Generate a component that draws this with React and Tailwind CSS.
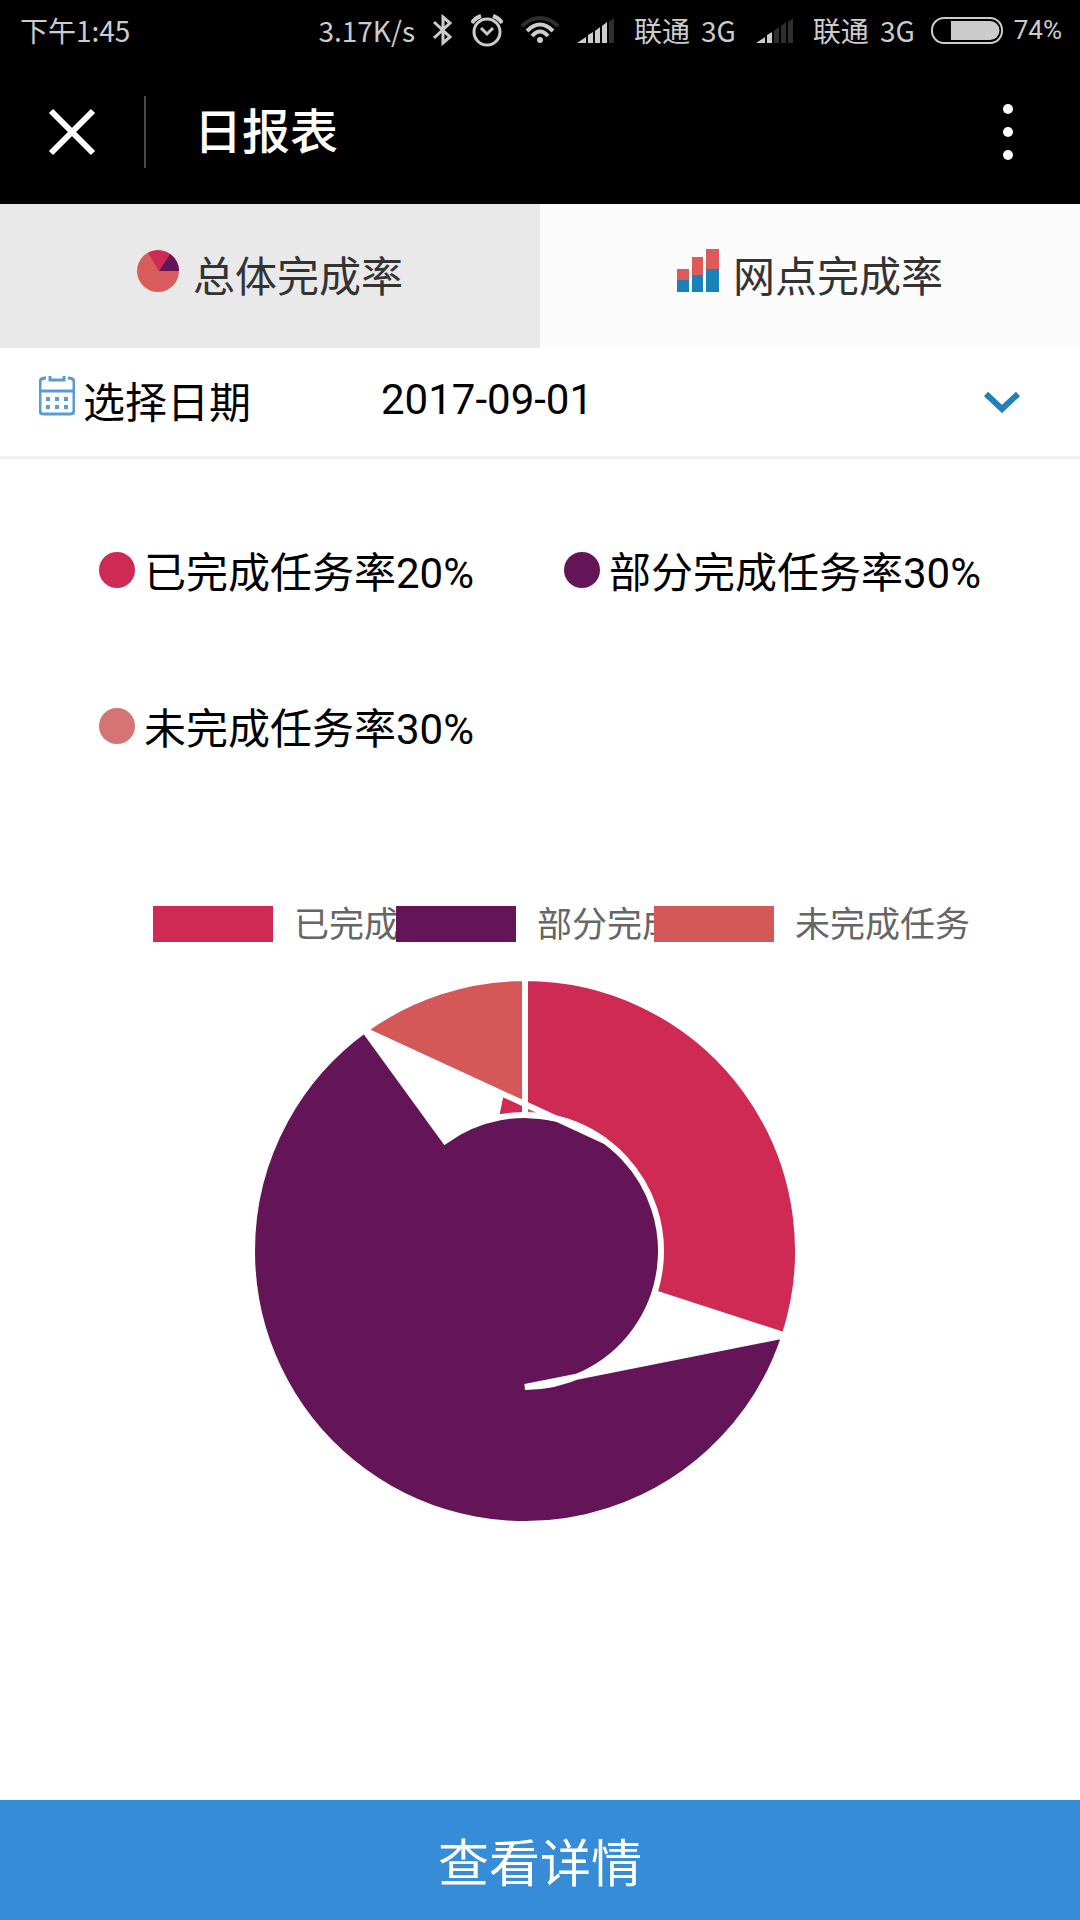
import React, { useState } from 'react';

const COLORS = {
  done: '#ce2a54',
  partial: '#641557',
  todo: '#d45858',
};

const rates = [
  { label: '已完成任务率', value: 20, dot: 'bg-[#ce2a54]' },
  { label: '部分完成任务率', value: 30, dot: 'bg-[#641557]' },
  { label: '未完成任务率', value: 30, dot: 'bg-[#d47474]' },
];

const chartData = [
  { label: '已完成任务', value: 30, color: COLORS.done },
  { label: '部分完成任务', value: 60, color: COLORS.partial },
  { label: '未完成任务', value: 10, color: COLORS.todo },
];

const OUTER = 273;
const INNER = 136;

const point = (radius, angle) => {
  const rad = (angle * Math.PI) / 180;
  return `${radius * Math.cos(rad)} ${radius * Math.sin(rad)}`;
};

// both arcs of a slice run clockwise, so slices fold over each other in the middle
const slicePath = (start, end) => {
  const sweep = end - start;
  const large = sweep > 180 ? 1 : 0;
  return [
    `M ${point(OUTER, start)}`,
    `A ${OUTER} ${OUTER} 0 ${large} 1 ${point(OUTER, end)}`,
    `L ${point(INNER, end)}`,
    `A ${INNER} ${INNER} 0 ${large} 1 ${point(INNER, end + sweep)}`,
    'Z',
  ].join(' ');
};

const DoughnutChart = ({ data }) => {
  const total = data.reduce((sum, item) => sum + item.value, 0);
  let angle = -90;
  const slices = data.map((item) => {
    const start = angle;
    angle += (item.value / total) * 360;
    return { ...item, d: slicePath(start, angle) };
  });

  return (
    <svg viewBox="-276 -276 552 552" className="w-[552px] h-[552px]" role="img" aria-label="任务完成率">
      {slices.map((slice) => (
        <path key={slice.label} d={slice.d} fill={slice.color} stroke="#fff" strokeWidth="6" />
      ))}
    </svg>
  );
};

const SignalIcon = ({ level }) => {
  const bars = ['M0 26 L9 20 V26 Z', 'M11 18 L16 15 V26 H11 Z', 'M18 14 L23 10 V26 H18 Z', 'M25 9 L30 5 V26 H25 Z', 'M32 5 L37 1 V26 H32 Z'];
  return (
    <svg viewBox="0 0 37 26" className="w-[37px] h-[26px]">
      {bars.map((d, i) => (
        <path key={d} d={d} fill={i < level ? '#ccc' : '#2e2e2e'} />
      ))}
    </svg>
  );
};

const Carrier = ({ level }) => (
  <div className="flex items-center">
    <SignalIcon level={level} />
    <span className="ml-5">联通</span>
    <span className="ml-[11px]">3G</span>
  </div>
);

const StatusBar = () => (
  <div className="flex items-center justify-between h-[60px] pl-5 pr-[18px] text-[28px] leading-none text-[#ccc]">
    <span>下午1:45</span>
    <div className="flex items-center">
      <span>3.17K/s</span>
      <svg viewBox="0 0 20 32" className="w-5 h-8 ml-[18px]" fill="none" stroke="#ccc" strokeWidth="3">
        <path d="M1 8 L17 23 L10 29 V3 L17 9 L1 24" />
      </svg>
      <svg viewBox="0 0 32 34" className="w-8 h-[34px] ml-[18px]" fill="none" stroke="#ccc" strokeWidth="3">
        <circle cx="16" cy="19" r="13" />
        <path d="M10 15 L16 21 L22 15" />
        <path d="M1 10 Q4 5 10 3 M31 10 Q28 5 22 3" strokeWidth="4" />
      </svg>
      <svg viewBox="0 0 38 30" className="w-[38px] h-[30px] ml-[18px]" fill="none" strokeWidth="4">
        <path d="M1 11 Q19 -5 37 11" stroke="#2e2e2e" />
        <path d="M6 16 Q19 3 32 16" stroke="#ccc" />
        <path d="M11 21 Q19 12 27 21" stroke="#ccc" />
        <circle cx="19" cy="25" r="3" fill="#ccc" />
      </svg>
      <div className="flex items-center gap-5 ml-[18px]">
        <Carrier level={4} />
        <Carrier level={2} />
      </div>
      <svg viewBox="0 0 72 27" className="w-[72px] h-[27px] ml-4">
        <rect x="1" y="1" width="70" height="25" rx="12" fill="none" stroke="#ccc" strokeWidth="2" />
        <path d="M20 4 H59 A9.5 9.5 0 0 1 59 23 H20 Z" fill="#ccc" />
      </svg>
      <span className="ml-[11px] font-[Roboto] text-[26px]">74%</span>
    </div>
  </div>
);

const TitleBar = () => (
  <header className="flex items-center h-36 text-white">
    <button type="button" aria-label="关闭" className="flex items-center justify-center w-36 h-[72px]">
      <svg viewBox="0 0 48 48" className="w-12 h-12" stroke="#fff" strokeWidth="6">
        <path d="M3 3 L45 45 M45 3 L3 45" />
      </svg>
    </button>
    <div className="w-[2px] h-[72px] bg-[#4a4a4a]"></div>
    <h1 className="flex-1 pl-12 pb-2 text-[48px] leading-none font-medium">日报表</h1>
    <button type="button" aria-label="更多" className="flex flex-col items-center gap-[13px] w-36">
      <span className="w-[10px] h-[10px] rounded-full bg-white"></span>
      <span className="w-[10px] h-[10px] rounded-full bg-white"></span>
      <span className="w-[10px] h-[10px] rounded-full bg-white"></span>
    </button>
  </header>
);

const PieIcon = () => (
  <svg viewBox="0 0 42 43" className="w-[42px] h-[43px]">
    <circle cx="21" cy="22" r="21" fill="#d95c5c" />
    <path d="M22 22 L11 4 Q21 -2 33 5 Z" fill="#ce2a54" />
    <path d="M22 22 L33 5 Q42 11 42 22 Z" fill="#641557" />
  </svg>
);

const BarsIcon = () => (
  <svg viewBox="0 0 42 43" className="w-[42px] h-[43px]">
    <path d="M0 20 H12 V32 H0 Z M15 8 H26 V26 H15 Z M29 0 H42 V21 H29 Z" fill="#dc5a5a" />
    <path d="M0 31 H12 V43 H0 Z M15 26 H26 V43 H15 Z M29 20 H42 V43 H29 Z" fill="#1a80b8" />
  </svg>
);

const CalendarIcon = () => (
  <svg viewBox="0 0 36 40" className="w-9 h-10 mb-2" fill="none" stroke="#5b9bd0">
    <path d="M1 15 V35 Q1 38 5 38 H31 Q35 38 35 35 V15" strokeWidth="3" />
    <path d="M7 2 Q1 2 1 6 V15 H35 V6 Q35 2 29 2" strokeWidth="3" />
    <path d="M11 0 V4 H25 V0" strokeWidth="3" />
    <path d="M7 23 H11 M16 23 H20 M25 23 H29 M7 31 H11 M16 31 H20 M25 31 H29" strokeWidth="4" />
  </svg>
);

const tabs = [
  { id: 'overall', label: '总体完成率', Icon: PieIcon },
  { id: 'branch', label: '网点完成率', Icon: BarsIcon },
];

const App = () => {
  const [activeTab, setActiveTab] = useState('overall');

  return (
    <div className="flex flex-col min-h-screen bg-white text-black font-['Noto_Sans_CJK_SC',sans-serif]">
      <div className="bg-black">
        <StatusBar />
        <TitleBar />
      </div>

      {/* Tabs */}
      <div className="grid grid-cols-2" role="tablist">
        {tabs.map(({ id, label, Icon }) => (
          <button
            key={id}
            type="button"
            role="tab"
            aria-selected={activeTab === id}
            onClick={() => setActiveTab(id)}
            className={`flex items-center justify-center gap-[14px] h-36 pb-1 text-[42px] leading-none text-[#333] ${activeTab === id ? 'bg-[#e9e9e9]' : 'bg-[#fbfbfb]'}`}
          >
            <span className="pb-2"><Icon /></span>
            <span>{label}</span>
          </button>
        ))}
      </div>

      {/* Date */}
      <button type="button" className="flex items-center h-[111px] pl-[39px] pr-[60px] pb-1 border-b-[3px] border-[#f1f1f1] text-[42px] leading-none">
        <CalendarIcon />
        <span className="w-[298px] pl-2 text-left">选择日期</span>
        <span className="flex-1 pl-2 text-left font-[Roboto]">2017-09-01</span>
        <svg viewBox="0 0 36 22" className="w-9 h-[22px] mt-1" fill="none" stroke="#2480b9" strokeWidth="6">
          <path d="M2 3 L18 18 L34 3" />
        </svg>
      </button>

      {/* Rates */}
      <ul className="grid grid-cols-2 px-[75px] pt-[33px]">
        {rates.map((rate) => (
          <li key={rate.label} className="flex items-center gap-[9px] h-[156px] pl-6 text-[42px] leading-none whitespace-nowrap">
            <span className={`w-9 h-9 rounded-full ${rate.dot}`}></span>
            <span className="pt-1">
              {rate.label}
              <span className="font-[Roboto]">{rate.value}%</span>
            </span>
          </li>
        ))}
      </ul>

      {/* Chart */}
      <div className="pt-[102px]">
        {/* labels run on under the next swatch */}
        <div className="flex pl-[153px] text-[35px] leading-8 text-[#666] whitespace-nowrap">
          <div className="flex w-[243px] gap-[21px]">
            <span className="w-[120px] h-9 shrink-0 bg-[#ce2a54]"></span>
            <span>{chartData[0].label}</span>
          </div>
          <div className="flex w-[258px] gap-[21px]">
            <span className="w-[120px] h-9 shrink-0 bg-[#641557]"></span>
            <span>{chartData[1].label}</span>
          </div>
          <div className="flex gap-[21px]">
            <span className="w-[120px] h-9 shrink-0 bg-[#d45858]"></span>
            <span>{chartData[2].label}</span>
          </div>
        </div>
        <div className="flex justify-center pt-[33px] pr-[30px]">
          <DoughnutChart data={chartData} />
        </div>
      </div>

      <button type="button" className="mt-auto h-[120px] bg-[#368cd6] text-[51px] leading-none text-white">
        查看详情
      </button>
    </div>
  );
};

export default App;
